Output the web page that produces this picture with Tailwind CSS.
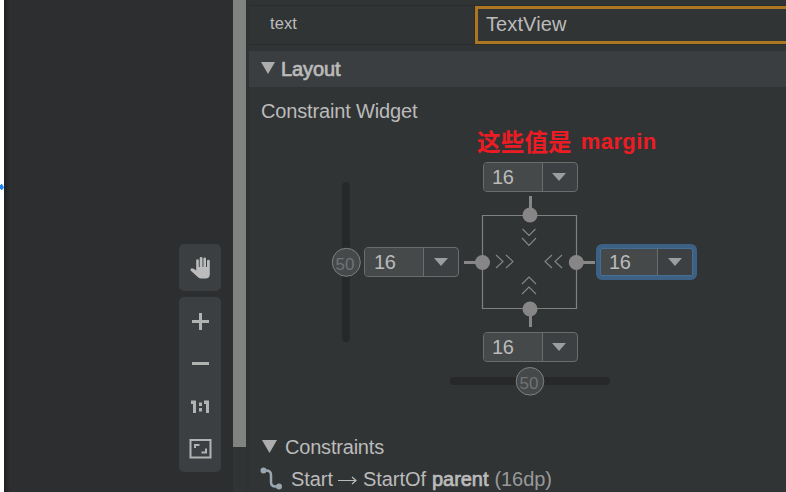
<!DOCTYPE html>
<html lang="zh">
<head>
<meta charset="utf-8">
<title>Layout attributes</title>
<script src="https://cdn.jsdelivr.net/npm/@tailwindcss/browser@4"></script>
</head>
<body class="w-[786px] h-[492px] overflow-hidden bg-[#313435] font-['Liberation_Sans','Noto_Sans_CJK_SC',sans-serif] text-[20px] leading-[24px] tracking-[-0.15px] text-[#bbbbbb]">
<div class="flex w-[786px] h-[492px]">
  <!-- window edge -->
  <div class="w-[4px] h-full bg-white flex flex-col pt-[184px]">
    <svg class="w-[4px] h-[7px]" viewBox="0 0 4 7"><path d="M0 1H1V0H2L4 3.5L2 6H1V5H0Z" fill="#1a86f5"/></svg>
  </div>
  <!-- design surface -->
  <div class="w-[229px] h-full bg-[#2d2e30] flex">
    <div class="w-[6px] h-full bg-linear-to-r from-[#202123] to-[#2d2e30]"></div>
    <div class="ml-[169px] mt-[244px] w-[42px] flex flex-col gap-[6px]">
      <div class="h-[47px] rounded-[5px] bg-[#3b3f41] flex justify-center pt-[12px] pl-[1px]">
        <svg class="w-[22px] h-[24px]" viewBox="0 0 22 24"><path d="M6.200 14.500V4.500a1.300 1.300 0 0 1 2.600 0V11H9.700V2.300a1.400 1.400 0 0 1 2.800 0V11H13.400V2.800a1.300 1.300 0 0 1 2.600 0V11H17V5.200a1.300 1.300 0 0 1 2.800 0V18Q19.800 22.500 15.500 22.500H11Q8.800 22.500 7.200 20.500L.6 14.400Q0 12.400 1.800 12.200Q3.500 12.200 6.200 14.500Z" fill="#bcbcbc"/></svg>
      </div>
      <div class="h-[175px] rounded-[5px] bg-[#3b3f41] flex flex-col items-center">
        <svg class="w-[42px] h-[175px]" viewBox="0 0 42 175" fill="none">
          <path d="M13 24.500H30M21.500 16V33M13 66.500H30" stroke="#b1b3b3" stroke-width="3"/>
          <path d="M12 103.500H17V116H14V107H12ZM25 103.500H30V116H27V107H25ZM20 105.500H23V109H20ZM20 111H23V114.500H20Z" fill="#b1b3b3"/>
          <path d="M11.500 143H31.500V160.500H11.500Z" stroke="#b1b3b3" stroke-width="2"/>
          <path d="M16 151V148H20.500M27 151.500V155.500H22.500" stroke="#b1b3b3" stroke-width="2"/>
        </svg>
      </div>
    </div>
  </div>
  <div class="w-[13px] h-[447px] bg-[#818381]"></div>
  <div class="w-[3px] h-full bg-[#2f3132]"></div>
  <!-- attributes panel -->
  <div class="w-[537px] h-full flex flex-col">
    <div class="h-[5px]"></div>
    <div class="h-[40px] border-y border-[#2a2c2d] flex">
      <div class="w-[226px] border-r border-[#2a2c2d] pl-[21px] pt-[5px] text-[16.500px] tracking-[0.100px]">text</div>
      <div class="w-[311px] h-[38px] border-[3px] border-r-0 border-[#ad7621] pl-[8px] pt-[3px] tracking-[0.100px]">TextView</div>
    </div>
    <div class="mt-[6px] h-[36px] bg-[#3b3e40] flex items-center pl-[12px]">
      <svg class="w-[14px] h-[12px] -mt-[2px]" viewBox="0 0 14 12"><path d="M0 0H14L7 12Z" fill="#adadad"/></svg>
      <div class="ml-[6px] [-webkit-text-stroke:0.700px_#bbbbbb] tracking-[-0.100px]">Layout</div>
    </div>
    <div class="pl-[12px] pt-[12px] h-[48px]">Constraint Widget</div>
    <!-- constraint canvas -->
    <div class="relative h-[295px] w-[537px]">
      <svg class="absolute left-0 top-0 w-[537px] h-[295px]" viewBox="249 135 537 295" fill="none">
        <path d="M342 186a4 4 0 0 1 8 0V338a4 4 0 0 1-8 0Z" fill="#262829"/>
        <rect x="450" y="377" width="160" height="8" rx="3" fill="#262829"/>
        <circle cx="346.300" cy="262.300" r="14" fill="#45494a" stroke="#808080"/>
        <circle cx="530" cy="381.300" r="13.800" fill="#45494a" stroke="#808080"/>
        <path d="M482.500 215.500H576.500V308.500H482.500Z" stroke="#808080" stroke-width="1.200"/>
        <path d="M530.500 196V215M530.500 309V327M464 262.500H482M576 262.500H595" stroke="#868686" stroke-width="3"/>
        <g fill="#868686"><circle cx="530" cy="215" r="7.500"/><circle cx="530" cy="309" r="7.500"/><circle cx="482.500" cy="262.500" r="7.500"/><circle cx="576.300" cy="262.500" r="7.500"/></g>
        <path d="M522.500 229L529 235.500L535.500 229M522 238L529 245.500L536 238M522 284L529 277L536 284M522 294L529 287L536 294M496 255L503 261.500L496 268M506 255L513 261.500L506 268M552 255L545 261.500L552 268M562 255L555 261.500L562 268" stroke="#878787" stroke-width="1.100"/>
      </svg>
      <div class="absolute left-[228px] top-[-5px] h-[24px] flex items-center whitespace-nowrap font-bold text-[#ed1c24]"><span class="-mt-[2px] text-[23.500px] tracking-[0.200px] font-['Noto_Sans_CJK_SC',sans-serif]">这些值是</span><span class="ml-[9px] text-[22px] tracking-[0.400px]">margin</span></div>

      <div class="absolute left-[82px] top-[118px] w-[28px] text-center text-[17px] tracking-[0px] text-[#707374]">50</div>
      <div class="absolute left-[266px] top-[237px] w-[28px] text-center text-[17px] tracking-[0px] text-[#707374]">50</div>

      <div class="absolute left-[234px] top-[27px] w-[95px] h-[30px] rounded-[4px] border border-[#6c6c6c] bg-[#3c4042] overflow-hidden flex">
        <div class="w-[59px] bg-[#45494a] border-r border-[#6c6c6c] pl-[8px] pt-[2px] tracking-[-0.300px]">16</div>
        <svg class="ml-[9px] mt-[10px] w-[14px] h-[8px]" viewBox="0 0 14 8"><path d="M0 0H14L7 8Z" fill="#9b9d9f"/></svg>
      </div>
      <div class="absolute left-[115px] top-[112px] w-[95px] h-[30px] rounded-[4px] border border-[#6c6c6c] bg-[#3c4042] overflow-hidden flex">
        <div class="w-[59px] bg-[#45494a] border-r border-[#6c6c6c] pl-[9px] pt-[2px] tracking-[-0.300px]">16</div>
        <svg class="ml-[10px] mt-[10px] w-[14px] h-[8px]" viewBox="0 0 14 8"><path d="M0 0H14L7 8Z" fill="#9b9d9f"/></svg>
      </div>
      <div class="absolute left-[347px] top-[109px] w-[101px] h-[36px] rounded-[6px] border-[4px] border-[#3d6185] bg-[#3c4042] flex">
        <div class="w-[58px] bg-[#45494a] border-r border-[#6c6c6c] pl-[9px] pt-[2px] tracking-[-0.300px] rounded-l-[2px] shadow-[inset_1px_1px_0_#466d94,inset_0_-1px_0_#466d94]">16</div>
        <div class="flex-1 rounded-r-[2px] shadow-[inset_-1px_1px_0_#466d94,inset_0_-1px_0_#466d94]"><svg class="ml-[10px] mt-[10px] w-[14px] h-[8px]" viewBox="0 0 14 8"><path d="M0 0H14L7 8Z" fill="#9b9d9f"/></svg></div>
      </div>
      <div class="absolute left-[234px] top-[197px] w-[95px] h-[30px] rounded-[4px] border border-[#6c6c6c] bg-[#3c4042] overflow-hidden flex">
        <div class="w-[59px] bg-[#45494a] border-r border-[#6c6c6c] pl-[8px] pt-[2px] tracking-[-0.300px]">16</div>
        <svg class="ml-[9px] mt-[10px] w-[14px] h-[8px]" viewBox="0 0 14 8"><path d="M0 0H14L7 8Z" fill="#9b9d9f"/></svg>
      </div>
    </div>
    <div class="h-[32px] pl-[13px] pt-[5px] flex">
      <svg class="mt-[5px] w-[15px] h-[13px]" viewBox="0 0 15 13"><path d="M0 0H15L7.500 13Z" fill="#adadad"/></svg>
      <div class="ml-[8px] tracking-[-0.200px]">Constraints</div>
    </div>
    <div class="h-[30px] pl-[11px] pt-[5px] flex whitespace-nowrap tracking-[-0.050px]">
      <svg class="w-[23px] h-[24px]" viewBox="0 0 23 24" fill="none"><path d="M3.500 3.500H6Q11 3.500 11 8V15Q11 19.500 15.500 19.500H19" stroke="#9aa7b0" stroke-width="2.500"/><circle cx="3.500" cy="3.500" r="3" fill="#9aa7b0"/><circle cx="19" cy="19.500" r="3" fill="#9aa7b0"/></svg>
      <span class="ml-[8px]">Start</span>
      <svg class="ml-[5px] mt-[6px] w-[19px] h-[14px]" viewBox="0 0 19 14" fill="none"><path d="M0 7.500H18M14 4L18 7.500L14 11" stroke="#bbbbbb" stroke-width="1.200"/></svg>
      <span class="ml-[6px]">StartOf</span>
      <span class="ml-[6px] [-webkit-text-stroke:0.700px_#bbbbbb]">parent</span>
      <span class="ml-[6px] text-[#999999]">(16dp)</span>
    </div>
  </div>
</div>
</body>
</html>
